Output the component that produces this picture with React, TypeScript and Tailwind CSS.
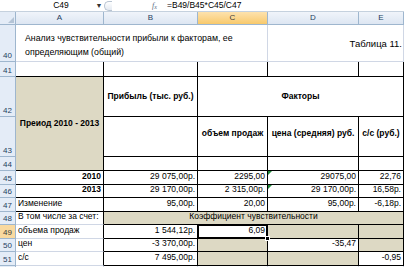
import React from 'react';
import { twMerge } from 'tailwind-merge';

// ячейка листа: по умолчанию светлая сетка, dark = рамка таблицы
function Cell({
  className = '',
  dark = false,
  children,
}: {
  className?: string;
  dark?: boolean;
  children?: React.ReactNode;
}) {
  return (
    <div
      className={twMerge(
        'flex items-end overflow-hidden whitespace-nowrap border-r border-b px-[2px] pb-[1px] leading-none text-[8.5px] text-black',
        dark ? 'border-black' : 'border-[#d0d7e5]',
        className
      )}
    >
      {children}
    </div>
  );
}

function RowHead({ className = '', selected = false, children }: { className?: string; selected?: boolean; children?: React.ReactNode }) {
  return (
    <div
      className={twMerge(
        'col-start-1 flex items-end justify-center border-r border-b border-[#9eb6ce] pb-[1px] text-[8px] leading-none',
        selected ? 'bg-[#f9d99f] text-[#3b3b3b]' : 'bg-[#e4ecf7] text-[#27415f]',
        className
      )}
    >
      {children}
    </div>
  );
}

function ColHead({ className = '', selected = false, children }: { className?: string; selected?: boolean; children: React.ReactNode }) {
  return (
    <div
      className={twMerge(
        'row-start-1 flex items-center justify-center border-r border-b border-[#9eb6ce] text-[8px] leading-none',
        selected ? 'bg-gradient-to-b from-[#fde2ad] to-[#f8c96b] text-[#3b3b3b]' : 'bg-gradient-to-b from-[#f0f4fa] to-[#dde6f2] text-[#27415f]',
        className
      )}
    >
      {children}
    </div>
  );
}

// зелёный уголок «число сохранено как текст»
function GreenMark() {
  return <span className="absolute left-0 top-0 h-0 w-0 border-l-[4px] border-b-[4px] border-l-[#1f8a3a] border-b-transparent" />;
}

export default function App() {
  return (
    <div className="h-[267px] w-[404px] overflow-hidden bg-white font-['Liberation_Sans',Arial,sans-serif]">
      {/* строка формул */}
      <div className="flex h-[12px] items-center border-b border-[#c5d1de] bg-white text-[8.5px] leading-none text-black">
        <div className="flex h-full w-[94px] items-center justify-center pl-[28px]">C49</div>
        <div className="flex h-full w-[10px] items-center justify-center text-[7px] text-[#333]">▼</div>
        <div className="flex h-full w-[12px] items-center">
          <span className="h-[10px] w-[8px] rounded-l-full border border-r-0 border-[#b8c4d2] bg-gradient-to-b from-white to-[#e3e9f1]" />
        </div>
        <div className="flex h-full flex-1 items-center">
          <span className="ml-[36px] w-[14px] font-['Liberation_Serif',serif] text-[8px] italic text-[#5a6a80]">
            f<sub className="text-[6px]">x</sub>
          </span>
          <span className="ml-[1px]">=B49/B45*C45/C47</span>
        </div>
      </div>

      <div className="grid grid-cols-[16px_88px_94px_70px_91px_45px] grid-rows-[13px_37px_15px_40px_40px_14px_14px_13px_14px_13px_14px_13px_14px_20px]">
        {/* заголовки столбцов */}
        <div className="relative col-start-1 row-start-1 border-r border-b border-[#9eb6ce] bg-[#e4ecf7]">
          <span className="absolute bottom-[1px] right-[1px] h-0 w-0 border-l-[6px] border-b-[6px] border-l-transparent border-b-[#b4c4d6]" />
        </div>
        <ColHead className="col-start-2">A</ColHead>
        <ColHead className="col-start-3">B</ColHead>
        <ColHead className="col-start-4" selected>C</ColHead>
        <ColHead className="col-start-5">D</ColHead>
        <ColHead className="col-start-6">E</ColHead>

        {/* номера строк */}
        <RowHead className="row-start-2">40</RowHead>
        <RowHead className="row-start-3">41</RowHead>
        <RowHead className="row-start-4">42</RowHead>
        <RowHead className="row-start-5">43</RowHead>
        <RowHead className="row-start-6">44</RowHead>
        <RowHead className="row-start-7">45</RowHead>
        <RowHead className="row-start-8">46</RowHead>
        <RowHead className="row-start-9">47</RowHead>
        <RowHead className="row-start-10">48</RowHead>
        <RowHead className="row-start-11" selected>49</RowHead>
        <RowHead className="row-start-12">50</RowHead>
        <RowHead className="row-start-13">51</RowHead>
        <RowHead className="row-start-14" />

        {/* строка 40 */}
        <Cell className="col-span-3 col-start-2 row-start-2 items-center whitespace-normal pl-[9px] pt-[4px] text-[8.8px] leading-[14px]">
          Анализ чувствительности прибыли к факторам, ее определяющим (общий)
        </Cell>
        <Cell className="col-span-2 col-start-5 row-start-2 items-center justify-end pr-[1px] pt-[3px] text-[9.5px]">Таблица 11.</Cell>

        {/* строка 41 */}
        <Cell className="col-start-2 row-start-3" dark />
        <Cell className="col-start-3 row-start-3" dark />
        <Cell className="col-start-4 row-start-3" dark />
        <Cell className="col-start-5 row-start-3" dark />
        <Cell className="col-start-6 row-start-3" dark />

        {/* шапка таблицы */}
        <Cell className="col-start-2 row-span-3 row-start-4 items-center justify-center bg-[#ddd9c4] font-bold" dark>
          Преиод 2010 - 2013
        </Cell>
        <Cell className="col-start-3 row-start-4 items-center justify-center font-bold" dark>
          Прибыль (тыс. руб.)
        </Cell>
        <Cell className="col-span-3 col-start-4 row-start-4 items-center justify-center font-bold" dark>
          Факторы
        </Cell>
        <Cell className="col-start-3 row-start-5" dark />
        <Cell className="col-start-4 row-start-5 items-center justify-center pb-[6px] font-bold" dark>
          объем продаж
        </Cell>
        <Cell className="col-start-5 row-start-5 items-center justify-center pb-[6px] font-bold" dark>
          цена (средняя) руб.
        </Cell>
        <Cell className="col-start-6 row-start-5 items-center justify-center pb-[6px] font-bold" dark>
          с/с (руб.)
        </Cell>
        <Cell className="col-start-3 row-start-6" dark />
        <Cell className="col-start-4 row-start-6" dark />
        <Cell className="col-start-5 row-start-6" dark />
        <Cell className="col-start-6 row-start-6" dark />

        {/* 45 */}
        <Cell className="col-start-2 row-start-7 justify-end font-bold" dark>2010</Cell>
        <Cell className="col-start-3 row-start-7 justify-end" dark>29 075,00р.</Cell>
        <Cell className="col-start-4 row-start-7 justify-end" dark>2295,00</Cell>
        <Cell className="relative col-start-5 row-start-7 justify-end" dark>
          <GreenMark />
          29075,00
        </Cell>
        <Cell className="col-start-6 row-start-7 justify-end" dark>22,76</Cell>

        {/* 46 */}
        <Cell className="col-start-2 row-start-8 justify-end font-bold" dark>2013</Cell>
        <Cell className="col-start-3 row-start-8 justify-end" dark>29 170,00р.</Cell>
        <Cell className="col-start-4 row-start-8 justify-end" dark>2 315,00р.</Cell>
        <Cell className="relative col-start-5 row-start-8 justify-end" dark>
          <GreenMark />
          29 170,00р.
        </Cell>
        <Cell className="col-start-6 row-start-8 justify-end" dark>16,58р.</Cell>

        {/* 47 */}
        <Cell className="col-start-2 row-start-9" dark>Изменение</Cell>
        <Cell className="col-start-3 row-start-9 justify-end" dark>95,00р.</Cell>
        <Cell className="col-start-4 row-start-9 justify-end" dark>20,00</Cell>
        <Cell className="col-start-5 row-start-9 justify-end" dark>95,00р.</Cell>
        <Cell className="col-start-6 row-start-9 justify-end" dark>-6,18р.</Cell>

        {/* 48 */}
        <Cell className="col-start-2 row-start-10 border-r-black">В том числе за счет:</Cell>
        <Cell className="col-span-4 col-start-3 row-start-10 justify-center bg-[#ddd9c4]" dark>
          Коэффициент чувствительности
        </Cell>

        {/* 49 */}
        <Cell className="col-start-2 row-start-11 border-r-black">объема продаж</Cell>
        <Cell className="col-start-3 row-start-11 justify-end" dark>1 544,12р.</Cell>
        <Cell className="relative col-start-4 row-start-11 justify-end overflow-visible" dark>
          6,09
          <span className="pointer-events-none absolute -left-[1px] -top-[1px] bottom-[-1px] right-[-1px] border-2 border-black" />
          <span className="absolute bottom-[-3px] right-[-3px] h-[5px] w-[5px] border border-white bg-black" />
        </Cell>
        <Cell className="col-start-5 row-start-11 bg-[#ddd9c4]" dark />
        <Cell className="col-start-6 row-start-11 bg-[#ddd9c4]" dark />

        {/* 50 */}
        <Cell className="col-start-2 row-start-12 border-r-black">цен</Cell>
        <Cell className="col-start-3 row-start-12 justify-end" dark>-3 370,00р.</Cell>
        <Cell className="col-start-4 row-start-12 bg-[#ddd9c4]" dark />
        <Cell className="col-start-5 row-start-12 justify-end" dark>-35,47</Cell>
        <Cell className="col-start-6 row-start-12 bg-[#ddd9c4]" dark />

        {/* 51 */}
        <Cell className="col-start-2 row-start-13 border-r-black">с/с</Cell>
        <Cell className="col-start-3 row-start-13 justify-end" dark>7 495,00р.</Cell>
        <Cell className="col-start-4 row-start-13 bg-[#ddd9c4]" dark />
        <Cell className="col-start-5 row-start-13 bg-[#ddd9c4]" dark />
        <Cell className="col-start-6 row-start-13 justify-end" dark>-0,95</Cell>

        {/* 52 */}
        <Cell className="col-start-2 row-start-14" />
        <Cell className="col-start-3 row-start-14" />
        <Cell className="col-start-4 row-start-14" />
        <Cell className="col-start-5 row-start-14" />
        <Cell className="col-start-6 row-start-14" />
      </div>
    </div>
  );
}
